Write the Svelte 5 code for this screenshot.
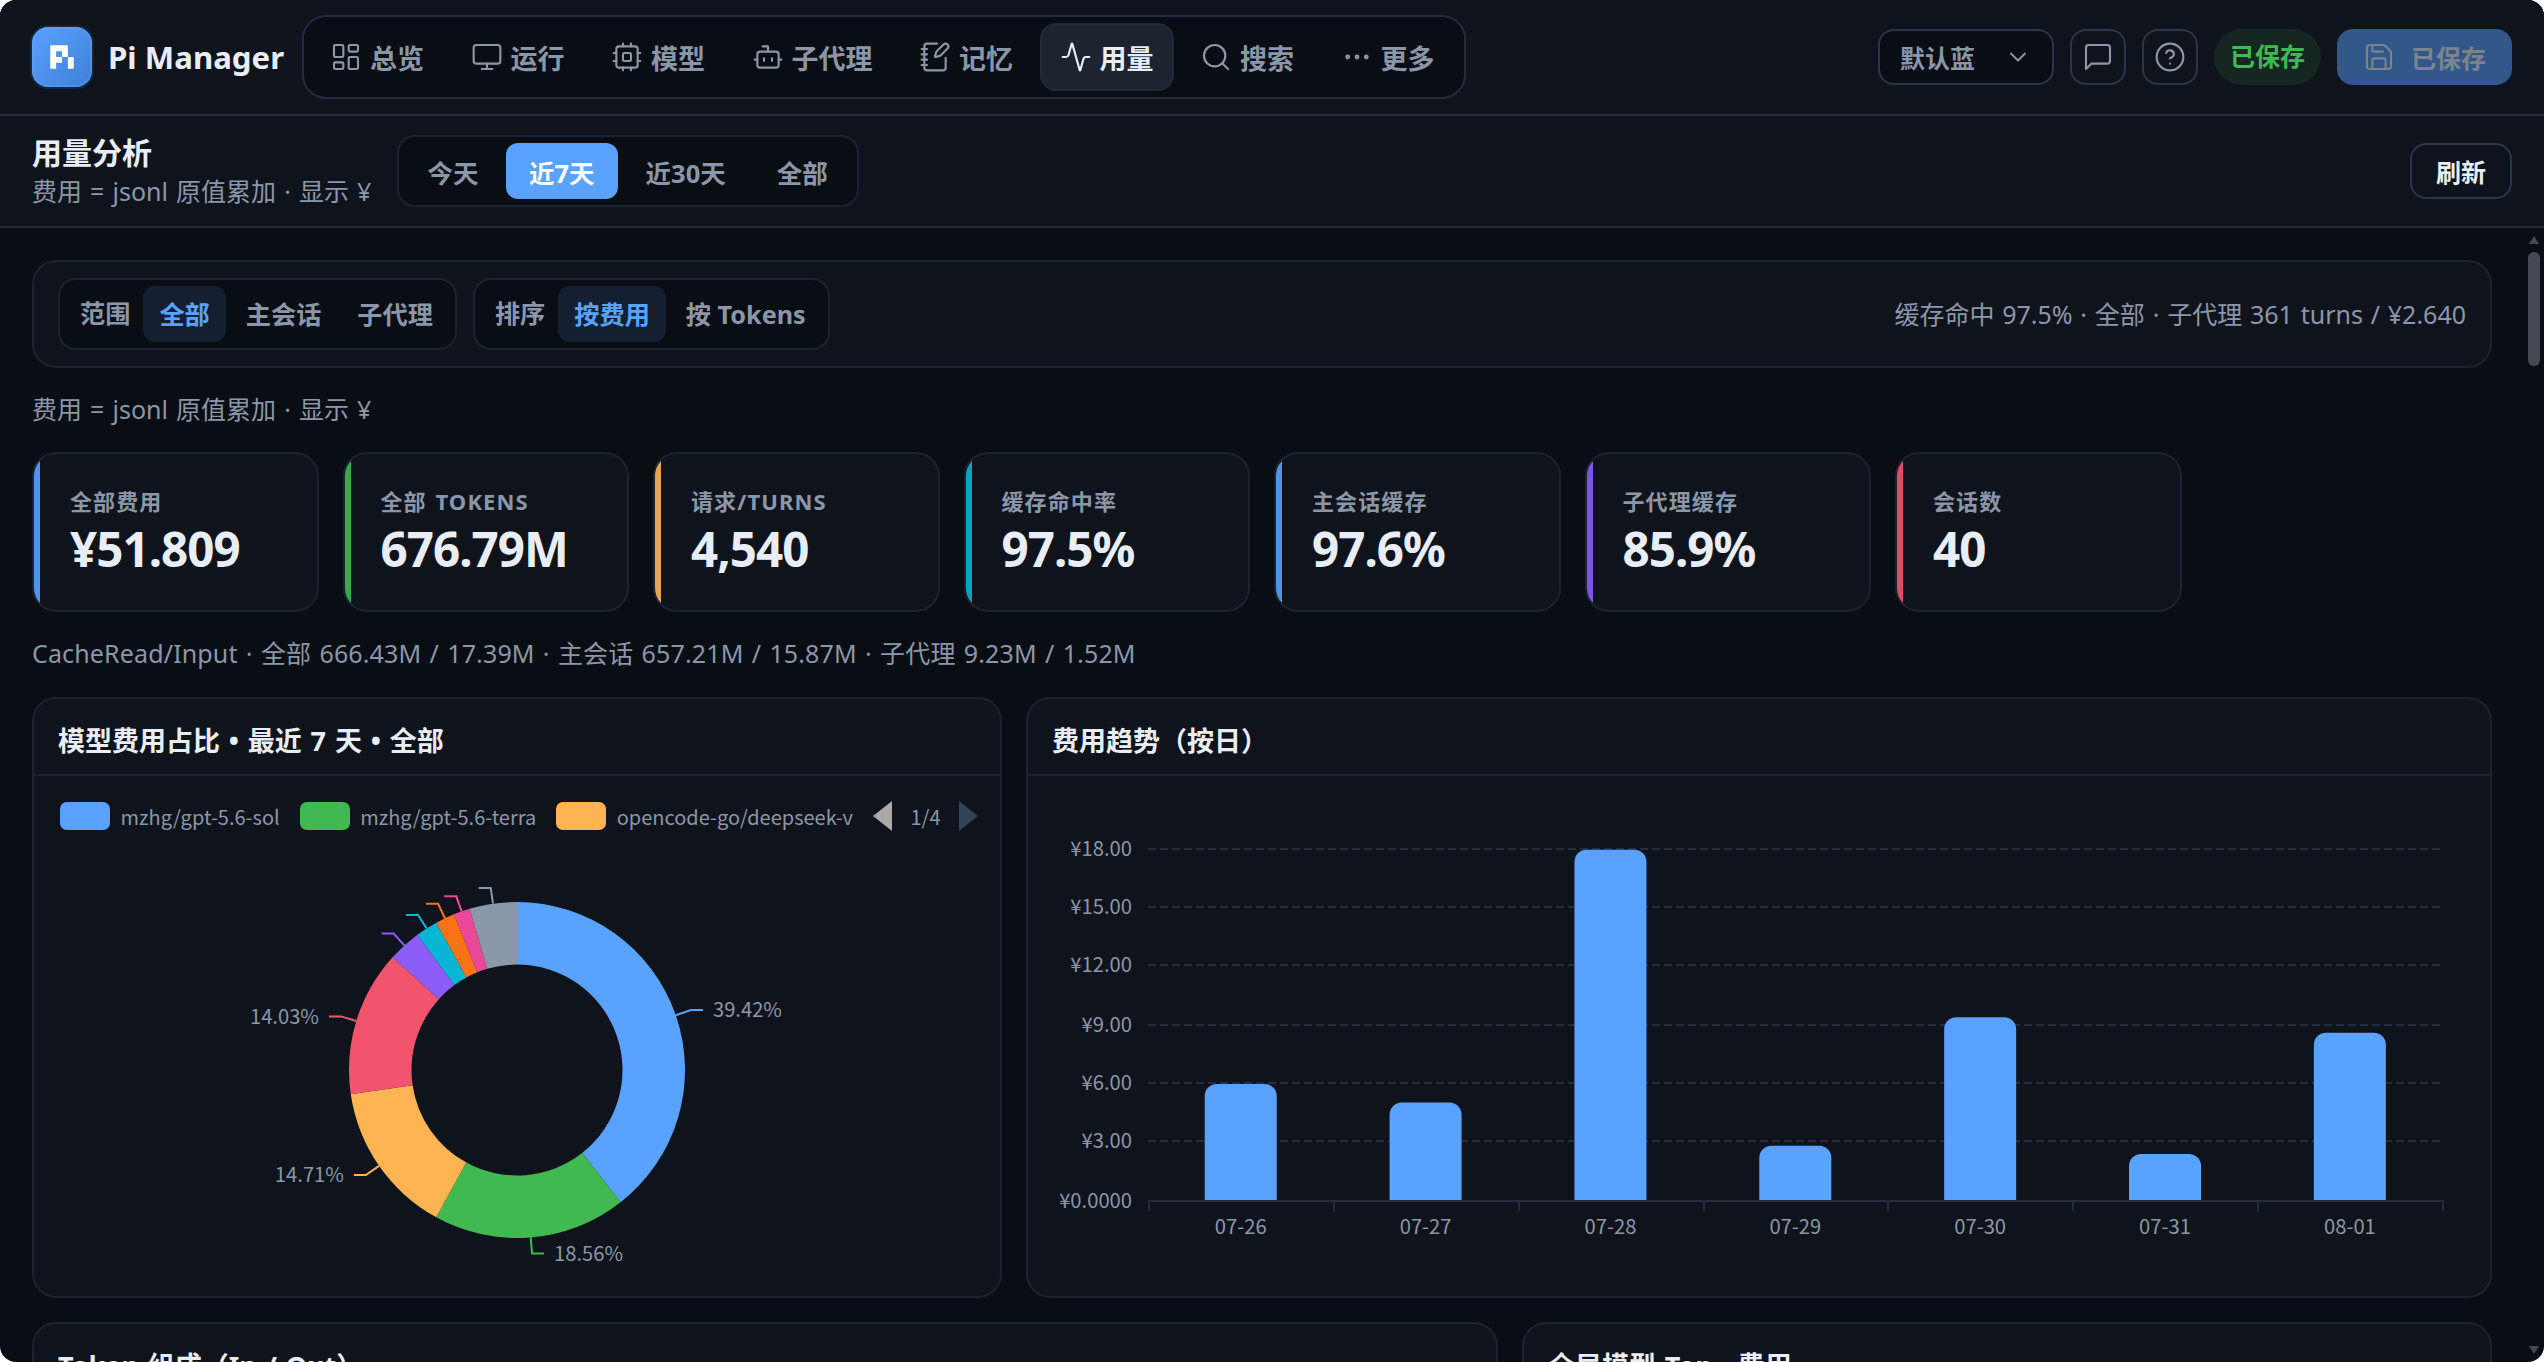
<script lang="ts">
  type Slice = { share: number; color: string; label?: string };

  const icons: Record<string, string[]> = {
    dashboard: [
      'M4 3h5a1 1 0 0 1 1 1v7a1 1 0 0 1-1 1H4a1 1 0 0 1-1-1V4a1 1 0 0 1 1-1z',
      'M15 3h5a1 1 0 0 1 1 1v3a1 1 0 0 1-1 1h-5a1 1 0 0 1-1-1V4a1 1 0 0 1 1-1z',
      'M15 12h5a1 1 0 0 1 1 1v7a1 1 0 0 1-1 1h-5a1 1 0 0 1-1-1v-7a1 1 0 0 1 1-1z',
      'M4 16h5a1 1 0 0 1 1 1v3a1 1 0 0 1-1 1H4a1 1 0 0 1-1-1v-3a1 1 0 0 1 1-1z'
    ],
    monitor: ['M4 3h16a2 2 0 0 1 2 2v10a2 2 0 0 1-2 2H4a2 2 0 0 1-2-2V5a2 2 0 0 1 2-2z', 'M8 21h8', 'M12 17v4'],
    cpu: [
      'M6 4h12a2 2 0 0 1 2 2v12a2 2 0 0 1-2 2H6a2 2 0 0 1-2-2V6a2 2 0 0 1 2-2z',
      'M10 9h4a1 1 0 0 1 1 1v4a1 1 0 0 1-1 1h-4a1 1 0 0 1-1-1v-4a1 1 0 0 1 1-1z',
      'M15 2v2', 'M15 20v2', 'M2 15h2', 'M2 9h2', 'M20 15h2', 'M20 9h2', 'M9 2v2', 'M9 20v2'
    ],
    bot: [
      'M12 8V4H8',
      'M6 8h12a2 2 0 0 1 2 2v8a2 2 0 0 1-2 2H6a2 2 0 0 1-2-2v-8a2 2 0 0 1 2-2z',
      'M2 14h2', 'M20 14h2', 'M15 13v2', 'M9 13v2'
    ],
    notebook: [
      'M13.4 2H6a2 2 0 0 0-2 2v16a2 2 0 0 0 2 2h12a2 2 0 0 0 2-2v-7.4',
      'M2 6h4', 'M2 10h4', 'M2 14h4', 'M2 18h4',
      'M21.378 5.626a1 1 0 1 0-3.004-3.004l-5.01 5.012a2 2 0 0 0-.506.854l-.837 2.87a.5.5 0 0 0 .62.62l2.87-.837a2 2 0 0 0 .854-.506z'
    ],
    activity: ['M22 12h-2.48a2 2 0 0 0-1.93 1.46l-2.35 8.36a.25.25 0 0 1-.48 0L9.24 2.18a.25.25 0 0 0-.48 0l-2.35 8.36A2 2 0 0 1 4.49 12H2'],
    search: ['M19 11a8 8 0 1 1-16 0 8 8 0 0 1 16 0z', 'm21 21-4.3-4.3'],
    more: [
      'M13 12a1 1 0 1 1-2 0 1 1 0 0 1 2 0z',
      'M20 12a1 1 0 1 1-2 0 1 1 0 0 1 2 0z',
      'M6 12a1 1 0 1 1-2 0 1 1 0 0 1 2 0z'
    ],
    chevron: ['m6 9 6 6 6-6'],
    message: ['M21 15a2 2 0 0 1-2 2H7l-4 4V5a2 2 0 0 1 2-2h14a2 2 0 0 1 2 2z'],
    help: ['M22 12a10 10 0 1 1-20 0 10 10 0 0 1 20 0z', 'M9.09 9a3 3 0 0 1 5.83 1c0 2-3 3-3 3', 'M12 17h.01'],
    save: [
      'M15.2 3a2 2 0 0 1 1.4.6l3.8 3.8a2 2 0 0 1 .6 1.4V19a2 2 0 0 1-2 2H5a2 2 0 0 1-2-2V5a2 2 0 0 1 2-2z',
      'M17 21v-7a1 1 0 0 0-1-1H8a1 1 0 0 0-1 1v7',
      'M7 3v4a1 1 0 0 0 1 1h7'
    ]
  };

  const nav = [
    { icon: 'dashboard', label: '总览' },
    { icon: 'monitor', label: '运行' },
    { icon: 'cpu', label: '模型' },
    { icon: 'bot', label: '子代理' },
    { icon: 'notebook', label: '记忆' },
    { icon: 'activity', label: '用量' },
    { icon: 'search', label: '搜索' },
    { icon: 'more', label: '更多' }
  ];

  const ranges = ['今天', '近7天', '近30天', '全部'];
  const scopes = ['全部', '主会话', '子代理'];
  const sorts = ['按费用', '按 Tokens'];

  let page = $state('用量');
  let range = $state('近7天');
  let scope = $state('全部');
  let sort = $state('按费用');

  const kpis = [
    { label: '全部费用', value: '¥51.809', color: '#5aa2ff' },
    { label: '全部 Tokens', value: '676.79M', color: '#40b950' },
    { label: '请求/Turns', value: '4,540', color: '#ffb454' },
    { label: '缓存命中率', value: '97.5%', color: '#06b6d4' },
    { label: '主会话缓存', value: '97.6%', color: '#5aa2ff' },
    { label: '子代理缓存', value: '85.9%', color: '#8b5cf6' },
    { label: '会话数', value: '40', color: '#f2546e' }
  ];

  const legend = [
    { name: 'mzhg/gpt-5.6-sol', color: '#5aa2ff' },
    { name: 'mzhg/gpt-5.6-terra', color: '#40b950' },
    { name: 'opencode-go/deepseek-v', color: '#ffb454' }
  ];

  const slices: Slice[] = [
    { share: 39.42, color: '#5aa2ff', label: '39.42%' },
    { share: 18.56, color: '#40b950', label: '18.56%' },
    { share: 14.71, color: '#ffb454', label: '14.71%' },
    { share: 14.03, color: '#f2546e', label: '14.03%' },
    { share: 3.17, color: '#8b5cf6' },
    { share: 2.14, color: '#06b6d4' },
    { share: 1.83, color: '#f97316' },
    { share: 1.58, color: '#ec4899' },
    { share: 4.56, color: '#8b98a9' }
  ];

  const cx = 483;
  const cy = 212;
  const outer = 168;
  const inner = 105.5;

  function polar(share: number, r: number) {
    const a = (share / 100) * Math.PI * 2;
    return { x: cx + r * Math.sin(a), y: cy - r * Math.cos(a) };
  }

  function buildArcs(items: Slice[]) {
    let from = 0;
    return items.map((s) => {
      const to = from + s.share;
      const mid = (from + to) / 2;
      const large = s.share > 50 ? 1 : 0;
      const a = polar(from, outer);
      const b = polar(to, outer);
      const c = polar(to, inner);
      const d = polar(from, inner);
      const p1 = polar(mid, outer);
      const p2 = polar(mid, outer + 16);
      const side = mid < 50 ? 1 : -1;
      from = to;
      return {
        ...s,
        side,
        path: `M${a.x} ${a.y}A${outer} ${outer} 0 ${large} 1 ${b.x} ${b.y}L${c.x} ${c.y}A${inner} ${inner} 0 ${large} 0 ${d.x} ${d.y}Z`,
        line: `${p1.x},${p1.y} ${p2.x},${p2.y} ${p2.x + side * 12},${p2.y}`,
        tx: p2.x + side * 22,
        ty: p2.y
      };
    });
  }

  const arcs = buildArcs(slices);

  const days = [
    { day: '07-26', cost: 5.98 },
    { day: '07-27', cost: 5.03 },
    { day: '07-28', cost: 17.96 },
    { day: '07-29', cost: 2.83 },
    { day: '07-30', cost: 9.4 },
    { day: '07-31', cost: 2.4 },
    { day: '08-01', cost: 8.6 }
  ];
  const yTicks = [
    { v: 18, y: 73, text: '¥18.00' },
    { v: 15, y: 131, text: '¥15.00' },
    { v: 12, y: 189, text: '¥12.00' },
    { v: 9, y: 249, text: '¥9.00' },
    { v: 6, y: 307, text: '¥6.00' },
    { v: 3, y: 365, text: '¥3.00' }
  ];

  const left = 120.3;
  const base = 425;
  const step = 184.86;
  const barWidth = 72;
  const perYuan = 19.56;

  function barPath(i: number, cost: number) {
    const x = left + step * (i + 0.5) - barWidth / 2;
    const h = cost * perYuan;
    const r = 12;
    return `M${x} ${base}V${base - h + r}a${r} ${r} 0 0 1 ${r} ${-r}h${barWidth - r * 2}a${r} ${r} 0 0 1 ${r} ${r}V${base}z`;
  }
</script>

{#snippet icon(name: string, size = 32)}
  <svg class="icon" width={size} height={size} viewBox="0 0 24 24" aria-hidden="true">
    {#each icons[name] as d}
      <path {d} />
    {/each}
  </svg>
{/snippet}

<div class="window">
  <header class="topbar">
    <div class="logo">
      <svg width="40" height="40" viewBox="0 0 800 800" fill="#fff" aria-hidden="true">
        <path fill-rule="evenodd" d="M165.3 165.3H517.4V400H400V517.4H282.7V634.7H165.3ZM282.7 282.7V400H400V282.7Z" />
        <path d="M517.4 400H634.7V634.7H517.4Z" />
      </svg>
    </div>
    <span class="brand">Pi Manager</span>
    <nav class="nav">
      {#each nav as item}
        <button class="nav-item" class:active={page === item.label} onclick={() => (page = item.label)}>
          {@render icon(item.icon)}
          <span>{item.label}</span>
        </button>
      {/each}
    </nav>
    <div class="actions">
      <button class="theme-select">
        <span>默认蓝</span>
        {@render icon('chevron', 28)}
      </button>
      <button class="icon-btn" aria-label="消息">{@render icon('message')}</button>
      <button class="icon-btn" aria-label="帮助">{@render icon('help')}</button>
      <span class="badge">已保存</span>
      <button class="save" disabled>
        {@render icon('save')}
        <span>已保存</span>
      </button>
    </div>
  </header>

  <div class="subbar">
    <div class="heading">
      <h1>用量分析</h1>
      <p>费用 = jsonl 原值累加 · 显示 ¥</p>
    </div>
    <div class="tabs">
      {#each ranges as r}
        <button class="tab" class:active={range === r} onclick={() => (range = r)}>{r}</button>
      {/each}
    </div>
    <button class="refresh">刷新</button>
  </div>

  <div class="scroller">
    <main class="content">
      <section class="filters">
        <div class="seg">
          <span class="seg-label">范围</span>
          {#each scopes as s}
            <button class="seg-btn" class:active={scope === s} onclick={() => (scope = s)}>{s}</button>
          {/each}
        </div>
        <div class="seg">
          <span class="seg-label">排序</span>
          {#each sorts as s}
            <button class="seg-btn" class:active={sort === s} onclick={() => (sort = s)}>{s}</button>
          {/each}
        </div>
        <span class="summary">缓存命中 97.5% · 全部 · 子代理 361 turns / ¥2.640</span>
      </section>

      <p class="note">费用 = jsonl 原值累加 · 显示 ¥</p>

      <section class="kpis">
        {#each kpis as k}
          <div class="kpi">
            <i class="stripe" style="background: {k.color}"></i>
            <span class="kpi-label">{k.label}</span>
            <strong class="kpi-value">{k.value}</strong>
          </div>
        {/each}
      </section>

      <p class="note cache">CacheRead/Input · 全部 666.43M / 17.39M · 主会话 657.21M / 15.87M · 子代理 9.23M / 1.52M</p>

      <div class="row narrow-wide">
        <section class="panel">
          <h2>模型费用占比 • 最近 7 天 • 全部</h2>
          <div class="legend">
            {#each legend as l}
              <span class="swatch" style="background: {l.color}"></span>
              <span class="legend-name">{l.name}</span>
            {/each}
            <svg class="pager" width="19" height="30" viewBox="0 0 19 30"><path d="M0 15 19 0V30z" fill="#aaa" /></svg>
            <span class="page">1/4</span>
            <svg class="pager" width="19" height="30" viewBox="0 0 19 30"><path d="M19 15 0 0V30z" fill="#2f4554" /></svg>
          </div>
          <svg class="chart" width="966" height="438" viewBox="0 0 966 438">
            {#each arcs as a}
              <path d={a.path} fill={a.color} />
              <polyline points={a.line} fill="none" stroke={a.color} stroke-width="2" />
              {#if a.label}
                <text x={a.tx} y={a.ty + 7.5} text-anchor={a.side > 0 ? 'start' : 'end'}>{a.label}</text>
              {/if}
            {/each}
          </svg>
        </section>

        <section class="panel">
          <h2>费用趋势（按日）</h2>
          <svg class="chart" width="1462" height="520" viewBox="0 0 1462 520">
            {#each yTicks as t}
              <line x1="120" x2="1415" y1={t.y} y2={t.y} class="grid" />
              <text x="104" y={t.y + 7} text-anchor="end">{t.text}</text>
            {/each}
            <text x="104" y={base + 7} text-anchor="end">¥0.0000</text>
            {#each days as d, i}
              <path d={barPath(i, d.cost)} fill="#5aa2ff" />
              <text x={left + step * (i + 0.5)} y="458" text-anchor="middle">{d.day}</text>
            {/each}
            <line x1="120" x2="1416" y1={base} y2={base} class="axis" />
            {#each Array(8) as _, i}
              <line x1={Math.round(121 + step * i)} x2={Math.round(121 + step * i)} y1={base} y2={base + 10} class="axis" />
            {/each}
          </svg>
        </section>
      </div>

      <div class="row wide-narrow">
        <section class="panel">
          <h2>Token 组成（In / Out）</h2>
        </section>
        <section class="panel">
          <h2>全局模型 Top · 费用</h2>
        </section>
      </div>
    </main>

    <div class="scrollbar">
      <svg width="12" height="8" viewBox="0 0 12 8"><path d="M6 0 11 8H1z" /></svg>
      <div class="thumb"></div>
      <svg class="down" width="12" height="8" viewBox="0 0 12 8"><path d="M6 8 11 0H1z" /></svg>
    </div>
  </div>
</div>

<style>
  :global(body) {
    margin: 0;
    background: #fff;
  }

  .window {
    --bg: #090d14;
    --panel: #0f141c;
    --line: #1b2330;
    --line-strong: #232d3f;
    --muted: #8b97a9;
    --text: #e8edf6;
    --blue: #5aa2ff;
    display: flex;
    flex-direction: column;
    height: 1362px;
    box-sizing: border-box;
    overflow: hidden;
    border-radius: 16px;
    background: var(--bg);
    color: var(--text);
    font-family: "Noto Sans", "Noto Sans CJK SC", sans-serif;
    font-size: 25px;
  }

  .window :global(*) {
    box-sizing: border-box;
  }

  button {
    margin: 0;
    padding: 0;
    border: 0;
    background: none;
    color: inherit;
    font: inherit;
    white-space: nowrap;
  }

  h1,
  h2,
  p {
    margin: 0;
  }

  .icon {
    flex: none;
    fill: none;
    stroke: currentColor;
    stroke-width: 1.6;
    stroke-linecap: round;
    stroke-linejoin: round;
  }

  .topbar {
    display: flex;
    align-items: center;
    flex: none;
    height: 116px;
    padding: 0 32px;
    background: var(--panel);
    border-bottom: 2px solid var(--line-strong);
  }

  .logo {
    display: grid;
    place-items: center;
    width: 60px;
    height: 60px;
    border-radius: 16px;
    background: linear-gradient(135deg, #5aa2ff, #3f7fd6);
    box-shadow:
      inset 0 0 0 2px rgba(90, 162, 255, 0.45),
      0 0 0 2px rgba(90, 162, 255, 0.12);
  }

  .brand {
    width: 194px;
    padding-left: 16px;
    font-size: 31.2px;
    font-weight: 700;
    line-height: 40px;
    white-space: nowrap;
  }

  .nav {
    display: flex;
    gap: 6.5px;
    width: 1164px;
    height: 84px;
    margin-left: 16px;
    padding: 6px;
    border: 2px solid var(--line-strong);
    border-radius: 24px;
    background: var(--bg);
  }

  .nav-item {
    display: flex;
    align-items: center;
    gap: 8px;
    height: 68px;
    padding: 0 18px;
    border: 2px solid transparent;
    border-radius: 16px;
    color: var(--muted);
    font-size: 27px;
    font-weight: 700;
  }

  .nav-item.active {
    border-color: #202a39;
    background: #1b242f;
    color: var(--text);
  }

  .actions {
    display: flex;
    align-items: center;
    gap: 16px;
    height: 56px;
    margin-left: auto;
    font-weight: 700;
  }

  .theme-select {
    display: flex;
    align-items: center;
    justify-content: space-between;
    width: 176px;
    height: 56px;
    padding: 0 20px;
    border: 2px solid #2a364a;
    border-radius: 16px;
    background: var(--bg);
    color: var(--muted);
  }

  .icon-btn {
    display: grid;
    place-items: center;
    width: 56px;
    height: 56px;
    border: 2px solid #2a364a;
    border-radius: 16px;
    color: var(--muted);
  }

  .badge {
    height: 56px;
    padding: 0 16px;
    border-radius: 28px;
    background: #162620;
    color: #40b950;
    line-height: 55px;
  }

  .save {
    display: flex;
    align-items: center;
    justify-content: center;
    gap: 16px;
    width: 175px;
    height: 56px;
    border-radius: 16px;
    background: #32588a;
    color: #7d838c;
  }

  .subbar {
    display: flex;
    align-items: center;
    flex: none;
    height: 112px;
    padding: 0 32px;
    background: var(--panel);
    border-bottom: 2px solid var(--line-strong);
  }

  .heading {
    width: 341px;
    padding-top: 2px;
    white-space: nowrap;
  }

  .heading h1 {
    font-size: 30px;
    font-weight: 700;
    line-height: 38px;
  }

  .heading p {
    color: var(--muted);
    line-height: 38px;
    word-spacing: 1.6px;
  }

  .tabs {
    display: flex;
    gap: 4px;
    height: 72px;
    margin-left: 24px;
    padding: 6px;
    border: 2px solid var(--line);
    border-radius: 18px;
    background: var(--bg);
  }

  .tab {
    height: 56px;
    padding: 0 23.5px;
    border-radius: 12px;
    color: var(--muted);
    font-size: 25.5px;
    font-weight: 700;
  }

  .tab:first-child {
    padding: 0 23px 0 22.5px;
  }

  .tab.active {
    background: var(--blue);
    color: #fff;
  }

  .refresh {
    width: 102px;
    height: 56px;
    margin-left: auto;
    border: 2px solid #2a364a;
    border-radius: 16px;
    font-weight: 700;
  }

  .scroller {
    display: flex;
    flex: 1;
    min-height: 0;
  }

  .content {
    flex: none;
    width: 2528px;
    padding: 32px 36px 0 32px;
    overflow: hidden;
  }

  .filters {
    display: flex;
    align-items: center;
    gap: 16px;
    height: 108px;
    padding: 0 24px;
    border: 2px solid var(--line);
    border-radius: 24px;
    background: var(--panel);
  }

  .seg {
    display: flex;
    gap: 4px;
    height: 72px;
    padding: 6px;
    border: 2px solid var(--line);
    border-radius: 18px;
    background: var(--bg);
    color: var(--muted);
    font-size: 25.2px;
    font-weight: 700;
    line-height: 55px;
    white-space: nowrap;
  }

  .seg-label {
    padding: 0 9px 0 14px;
    font-weight: 600;
  }

  .seg-btn {
    height: 56px;
    padding: 0 16px;
    border-radius: 12px;
  }

  .seg-btn.active {
    background: #142032;
    color: var(--blue);
  }

  .summary {
    margin-left: auto;
    padding-bottom: 2px;
    color: var(--muted);
    word-spacing: 1.3px;
  }

  .note {
    height: 84px;
    color: var(--muted);
    line-height: 82px;
    white-space: nowrap;
    word-spacing: 1.6px;
  }

  .cache {
    letter-spacing: 0.14px;
  }

  .kpis {
    display: grid;
    grid-template-columns: repeat(8, 1fr);
    gap: 24px;
  }

  .kpi {
    position: relative;
    display: flex;
    flex-direction: column;
    height: 160px;
    padding: 31px 0 0 36px;
    border: 2px solid var(--line);
    border-radius: 24px;
    background: var(--panel);
    overflow: hidden;
  }

  .stripe {
    position: absolute;
    inset: 0 auto 0 0;
    width: 6px;
    opacity: 0.9;
  }

  .kpi-label {
    color: var(--muted);
    font-size: 22px;
    font-weight: 700;
    line-height: 32px;
    letter-spacing: 0.05em;
    word-spacing: 2px;
    text-transform: uppercase;
  }

  .kpi-value {
    font-size: 47.5px;
    font-weight: 700;
    line-height: 64px;
    letter-spacing: -0.02em;
  }

  .row {
    display: grid;
    gap: 24px;
  }

  .narrow-wide {
    grid-template-columns: 970px 1fr;
    height: 601px;
    margin-top: 1px;
  }

  .wide-narrow {
    grid-template-columns: 1fr 970px;
    height: 601px;
    margin-top: 24px;
  }

  .panel {
    border: 2px solid var(--line);
    border-radius: 24px;
    background: var(--panel);
    overflow: hidden;
  }

  .panel h2 {
    height: 77px;
    padding: 6px 24px 0;
    border-bottom: 2px solid var(--line);
    font-size: 27px;
    font-weight: 700;
    line-height: 71px;
    word-spacing: 1.8px;
  }

  .legend {
    display: flex;
    align-items: center;
    height: 80px;
    margin-bottom: 2px;
    padding-left: 26px;
    color: var(--muted);
    font-family: "Noto Sans CJK SC", sans-serif;
    font-size: 20px;
    white-space: nowrap;
  }

  .swatch {
    flex: none;
    width: 50px;
    height: 28px;
    border-radius: 7px;
  }

  .legend-name {
    margin: 0 20px 0 10.5px;
  }

  .pager {
    flex: none;
  }

  .page {
    margin: 0 18.5px;
  }

  .chart {
    display: block;
  }

  .chart text {
    fill: var(--muted);
    font-family: "Noto Sans CJK SC", sans-serif;
    font-size: 20.2px;
  }

  .grid {
    stroke: var(--line-strong);
    stroke-width: 2;
    stroke-dasharray: 8 4;
  }

  .axis {
    stroke: var(--line-strong);
    stroke-width: 2;
  }

  .scrollbar {
    display: flex;
    flex-direction: column;
    width: 12px;
    padding: 8px 0;
    fill: #434a54;
  }

  .thumb {
    flex: none;
    height: 114px;
    margin-top: 8px;
    border-radius: 6px;
    background: #434a54;
  }

  .down {
    margin-top: auto;
  }
</style>
